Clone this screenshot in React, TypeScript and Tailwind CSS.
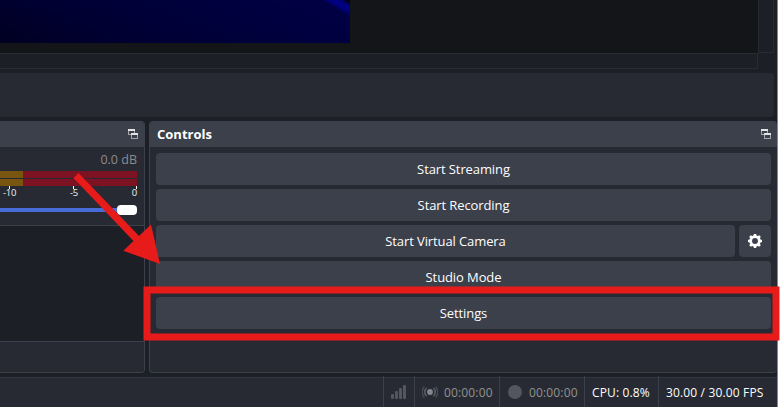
import type { ReactNode } from 'react';

function PopOutIcon() {
  return (
    <svg width="10" height="10" viewBox="0 0 10 10" shapeRendering="crispEdges" className="shrink-0">
      <path d="M0 1h1v5h-1zM6 2h1v2h-1zM1 5h2v1h-2zM3 5h1v5h-1zM9 6h1v4h-1zM4 9h5v1h-5z" fill="#a3a5ab" />
      <path d="M0 0h7v2h-7zM3 4h7v2h-7z" fill="#e1e2e4" />
    </svg>
  );
}

function GearIcon() {
  const teeth = [0, 45, 90, 135, 180, 225, 270, 315];
  return (
    <svg width="14" height="14" viewBox="-7 -7 14 14">
      <circle r="4.3" fill="none" stroke="#fefefe" strokeWidth="2.7" />
      {teeth.map((a) => (
        <path key={a} d="M-1.7 -5.1L-1.1 -7H1.1L1.7 -5.1z" fill="#fefefe" transform={`rotate(${a})`} />
      ))}
    </svg>
  );
}

function DockHeader({ title }: { title?: string }) {
  return (
    <div className="flex h-[26px] shrink-0 items-center justify-between bg-[#3c404b] pr-[6px] pl-[7px]">
      <span className="text-[13px] leading-[26px] font-bold text-white">{title}</span>
      <PopOutIcon />
    </div>
  );
}

function DockButton({ children, className = 'w-full pt-[2px]' }: { children: ReactNode; className?: string }) {
  return (
    <button className={`flex h-8 shrink-0 items-center justify-center rounded-[4px] bg-[#3c404b] text-[13px] tracking-[-0.1px] text-[#fefefe] ${className}`}>
      {children}
    </button>
  );
}

function MeterRow() {
  return (
    <div className="flex h-[7px]">
      <div className="w-[23px] bg-[#78560f]" />
      <div className="w-[114px] bg-[#7d1222]" />
    </div>
  );
}

function Preview() {
  return (
    <div className="flex h-[69px]">
      <div className="w-[758px]">
        <div className="h-[53px] bg-[#141519]">
          <svg width="350" height="43" className="block">
            <defs>
              <linearGradient id="night" x1="0" y1="1" x2="1" y2="0.7">
                <stop offset="0" stopColor="#000022" />
                <stop offset="0.5" stopColor="#000037" />
                <stop offset="1" stopColor="#000042" />
              </linearGradient>
              <filter id="soft"><feGaussianBlur stdDeviation="0.8" /></filter>
            </defs>
            <rect width="350" height="43" fill="url(#night)" />
            <g filter="url(#soft)">
              <path d="M338 -2L352 8V-2z" fill="#00001c" />
              <path d="M320 -3L337 -3L354 8V17z" fill="#000080" />
            </g>
          </svg>
        </div>
        <div className="h-4 border-y border-r border-[#292b34]" />
      </div>
      <div className="h-[53px] w-4 border-r border-b border-l border-[#292b34]" />
    </div>
  );
}

function MixerDock() {
  return (
    <section className="flex w-[145px] shrink-0 flex-col overflow-hidden rounded-r-[4px] border-r border-b border-[#3c404b]">
      <DockHeader />
      <div className="h-[79px] shrink-0 border-b border-[#3c404b] bg-[#272a33]">
        <div className="mr-[7px] h-6 text-right text-[12.5px] leading-[25px] text-[#8b8c90]">0.0 dB</div>
        <div className="flex w-[137px] flex-col gap-px">
          <MeterRow />
          <MeterRow />
        </div>
        <div className="flex h-[3px] w-[137px] justify-between pl-[9px]">
          <div className="w-px bg-white" />
          <div className="w-px bg-white" />
          <div className="w-px bg-white" />
        </div>
        <div className="flex h-4 w-[137px] justify-between pl-[3px] text-[9.5px] leading-[8px] tracking-[-0.2px] text-[#f0f0f0]">
          <span>-10</span>
          <span>-5</span>
          <span>0</span>
        </div>
        <div className="flex h-[10px] w-[137px] items-center">
          <div className="h-1 flex-1 bg-[#476bd7]" />
          <div className="h-[10px] w-5 rounded-[4px] bg-white" />
        </div>
      </div>
      <div className="flex-1 bg-[#1d1f26]" />
      <div className="h-[31px] shrink-0 border-t border-[#3c404b] bg-[#272a33]" />
    </section>
  );
}

function ControlsDock() {
  return (
    <section className="flex flex-1 flex-col overflow-hidden rounded-[4px] border-b border-l border-[#3c404b] bg-[#272a33]">
      <DockHeader title="Controls" />
      <div className="flex flex-col gap-1 p-[6px]">
        <DockButton>Start Streaming</DockButton>
        <DockButton>Start Recording</DockButton>
        <div className="flex gap-1">
          <DockButton className="flex-1 pt-[2px]">Start Virtual Camera</DockButton>
          <DockButton className="w-8"><GearIcon /></DockButton>
        </div>
        <DockButton>Studio Mode</DockButton>
        <DockButton>Settings</DockButton>
      </div>
    </section>
  );
}

function StatusBar() {
  const cell = 'flex items-center border-l border-[#3c404b] pt-[1px]';
  return (
    <footer className="flex h-[31px] justify-end bg-linear-to-b from-[#1d1f26] from-[1px] via-[#3c404b] via-[1px] to-[#272a33] to-[2px] text-[12px] tracking-[0.15px] whitespace-nowrap">
      <div className={`${cell} w-[31px] pl-[7px]`}>
        <svg width="15" height="14" fill="#53565e">
          <rect y="9" width="3" height="5" rx="1" />
          <rect x="4" y="6" width="3" height="8" rx="1" />
          <rect x="8" y="3" width="3" height="11" rx="1" />
          <rect x="12" width="3" height="14" rx="1" />
        </svg>
      </div>
      <div className={`${cell} w-[85px] gap-[6px] pl-[7px] text-[#92938f]`}>
        <svg width="16" height="14" viewBox="-8 -7 16 14" fill="none" strokeWidth="1.5">
          <circle r="2.9" fill="#84868b" />
          <path d="M-3.3 -4A5 5 0 0 0 -3.3 4M3.3 -4A5 5 0 0 1 3.3 4" stroke="#5c5f67" />
          <path d="M-5.6 -5.5A8 8 0 0 0 -5.6 5.5M5.6 -5.5A8 8 0 0 1 5.6 5.5" stroke="#464952" />
        </svg>
        <span className="pt-px">00:00:00</span>
      </div>
      <div className={`${cell} w-[85px] gap-[7px] pl-2 text-[#92938f]`}>
        <div className="size-[14px] rounded-full bg-[#53565e]" />
        <span className="pt-px">00:00:00</span>
      </div>
      <div className={`${cell} w-[74px] pl-[7px] text-[#fefefe]`}><span className="pt-px">CPU: 0.8%</span></div>
      <div className={`${cell} w-[119px] pl-[7px] text-[#fefefe]`}><span className="pt-px">30.00 / 30.00 FPS</span></div>
    </footer>
  );
}

export default function App() {
  return (
    <div className="relative h-[407px] w-[780px] overflow-hidden bg-white font-['Open_Sans',sans-serif]">
      <div className="flex h-full w-[778px] flex-col border-r border-[#85878a] bg-[#1d1f26]">
        <Preview />
        <div className="mt-1 h-11 w-[774px] rounded-r-[4px] bg-[#272a33]" />
        <div className="mt-1 flex h-[252px] gap-1">
          <MixerDock />
          <ControlsDock />
        </div>
        <div className="mt-[3px]">
          <StatusBar />
        </div>
      </div>
      <svg width="780" height="407" className="pointer-events-none absolute inset-0" fill="#e81b1b">
        <path d="M78.5 173L73.5 178L133.5 241L123.3 250.7L160 264L151 224.5L139 236z" />
        <rect x="147" y="290" width="629" height="47" fill="none" stroke="#e81b1b" strokeWidth="7" />
      </svg>
    </div>
  );
}
